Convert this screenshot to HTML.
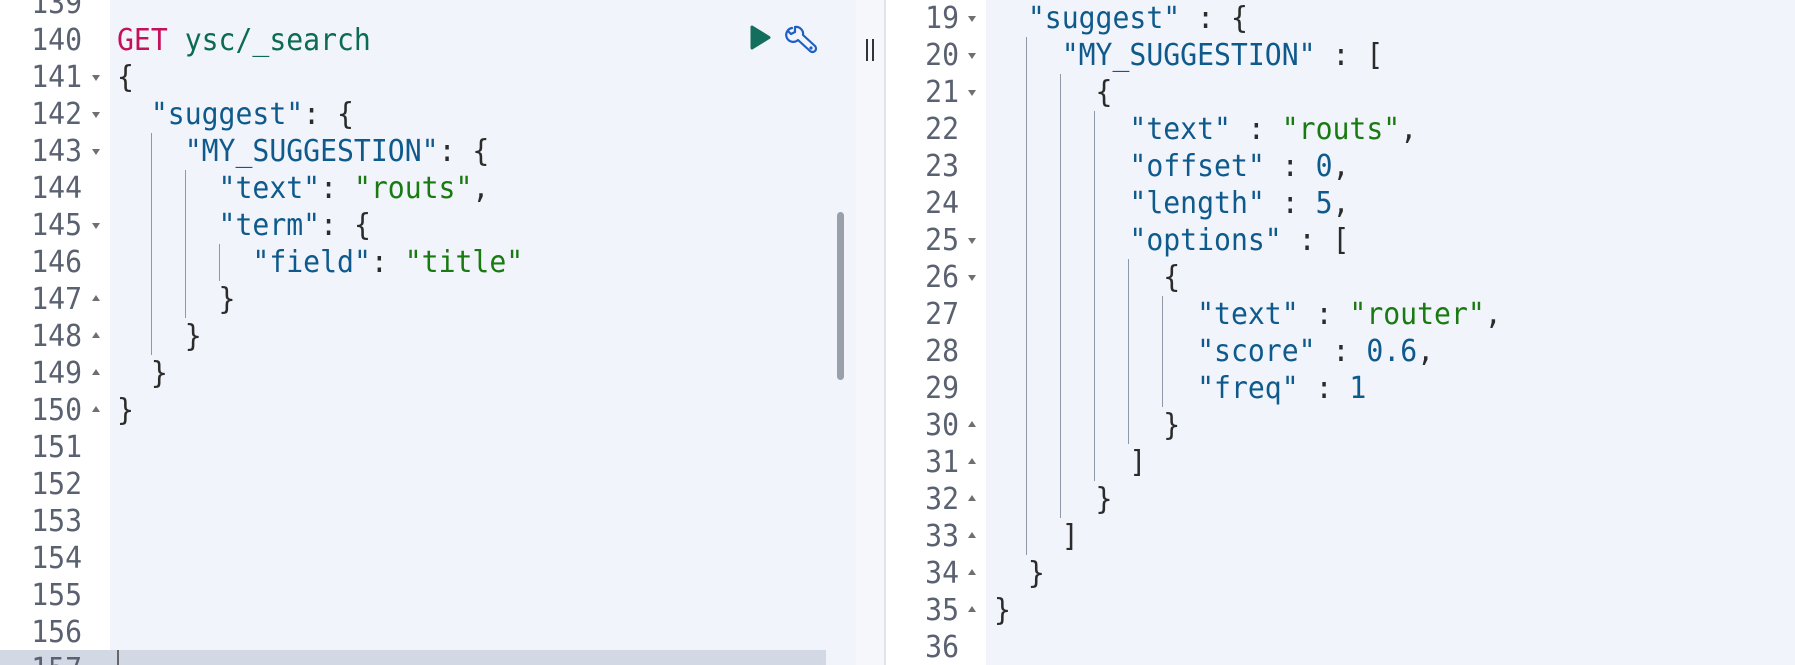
<!DOCTYPE html>
<html><head><meta charset="utf-8"><style>
html,body{margin:0;padding:0;width:1795px;height:665px;overflow:hidden;background:#fff;position:relative}
.f{font-family:"DejaVu Sans Mono","Liberation Mono",monospace;font-size:30px;line-height:37px;white-space:pre;position:absolute;height:37px;transform:scaleX(0.937);transform-origin:left center}
.n{color:#5a6170;text-align:right;width:60px;transform-origin:right center}
.c{color:#2b2b2b}
.k{color:#0f5a8c}.s{color:#1a7a12}.m{color:#c5105c}.u{color:#0c6b57}.num{color:#0f5a8c}
.g{position:absolute;width:1px;background:#8f98a6}
.dn,.up{position:absolute;width:0;height:0;border-left:4.5px solid transparent;border-right:4.5px solid transparent}
.dn{border-top:6px solid #6f6f6f}
.up{border-bottom:6px solid #6f6f6f}
</style></head><body>
<div style="position:absolute;left:110px;top:0;width:746px;height:665px;background:#f1f4fa"></div>
<div style="position:absolute;left:856px;top:0;width:28px;height:665px;background:#f5f7fb"></div>
<div style="position:absolute;left:884px;top:0;width:2px;height:665px;background:#dfe3ea"></div>
<div style="position:absolute;left:986px;top:0;width:809px;height:665px;background:#f1f4fa"></div>
<div style="position:absolute;left:0;top:650px;width:826px;height:15px;background:#d3d9e4"></div>
<div style="position:absolute;left:117px;top:650px;width:2px;height:15px;background:#666"></div>
<div style="position:absolute;left:837px;top:212px;width:7px;height:168px;background:#9aa0aa;border-radius:4px"></div>
<div style="position:absolute;left:866px;top:39px;width:2px;height:22px;background:#333"></div>
<div style="position:absolute;left:872px;top:39px;width:2px;height:22px;background:#333"></div>
<svg style="position:absolute;left:750px;top:25px" width="21" height="25"><path d="M2 2 L19 12.5 L2 23 Z" fill="#136e5e" stroke="#136e5e" stroke-width="3" stroke-linejoin="round"/></svg>
<svg style="position:absolute;left:783px;top:25px" width="36" height="30" viewBox="0 0 36 30"><path d="M9 3 A7 7 0 1 0 15 15 L27 26 A3.5 3.5 0 0 0 32 21 L20 10 A7 7 0 0 0 12 2 L12 7 L8 9 L5 6" fill="none" stroke="#1f5fc4" stroke-width="2.2" stroke-linejoin="round" stroke-linecap="round"/><circle cx="28" cy="23" r="1.6" fill="#1f5fc4"/></svg>

<!-- left -->
<div class="f n" style="left:22px;top:-15.5px">139</div>
<div class="f n" style="left:22px;top:21.5px">140</div><div class="f" style="left:117px;top:21.5px"><span class="m">GET</span> <span class="u">ysc/_search</span></div>
<div class="f n" style="left:22px;top:58.5px">141</div><div class="dn" style="left:92px;top:75px"></div><div class="f c" style="left:117px;top:58.5px">{</div>
<div class="f n" style="left:22px;top:95.5px">142</div><div class="dn" style="left:92px;top:112px"></div><div class="f c" style="left:117px;top:95.5px">  <span class="k">"suggest"</span>: {</div>
<div class="f n" style="left:22px;top:132.5px">143</div><div class="dn" style="left:92px;top:149px"></div><div class="f c" style="left:117px;top:132.5px">    <span class="k">"MY_SUGGESTION"</span>: {</div>
<div class="f n" style="left:22px;top:169.5px">144</div><div class="f c" style="left:117px;top:169.5px">      <span class="k">"text"</span>: <span class="s">"routs"</span>,</div>
<div class="f n" style="left:22px;top:206.5px">145</div><div class="dn" style="left:92px;top:223px"></div><div class="f c" style="left:117px;top:206.5px">      <span class="k">"term"</span>: {</div>
<div class="f n" style="left:22px;top:243.5px">146</div><div class="f c" style="left:117px;top:243.5px">        <span class="k">"field"</span>: <span class="s">"title"</span></div>
<div class="f n" style="left:22px;top:280.5px">147</div><div class="up" style="left:92px;top:295px"></div><div class="f c" style="left:117px;top:280.5px">      }</div>
<div class="f n" style="left:22px;top:317.5px">148</div><div class="up" style="left:92px;top:332px"></div><div class="f c" style="left:117px;top:317.5px">    }</div>
<div class="f n" style="left:22px;top:354.5px">149</div><div class="up" style="left:92px;top:369px"></div><div class="f c" style="left:117px;top:354.5px">  }</div>
<div class="f n" style="left:22px;top:391.5px">150</div><div class="up" style="left:92px;top:406px"></div><div class="f c" style="left:117px;top:391.5px">}</div>
<div class="f n" style="left:22px;top:428.5px">151</div>
<div class="f n" style="left:22px;top:465.5px">152</div>
<div class="f n" style="left:22px;top:502.5px">153</div>
<div class="f n" style="left:22px;top:539.5px">154</div>
<div class="f n" style="left:22px;top:576.5px">155</div>
<div class="f n" style="left:22px;top:613.5px">156</div>
<div class="f n" style="left:22px;top:650.5px">157</div>
<div class="g" style="left:151px;top:132.5px;height:222px"></div>
<div class="g" style="left:185px;top:169.5px;height:148px"></div>
<div class="g" style="left:219px;top:243.5px;height:37px"></div>

<!-- right -->
<div class="f n" style="left:899px;top:0px">19</div><div class="dn" style="left:968px;top:16px"></div><div class="f c" style="left:994px;top:0px">  <span class="k">"suggest"</span> : {</div>
<div class="f n" style="left:899px;top:37px">20</div><div class="dn" style="left:968px;top:53px"></div><div class="f c" style="left:994px;top:37px">    <span class="k">"MY_SUGGESTION"</span> : [</div>
<div class="f n" style="left:899px;top:74px">21</div><div class="dn" style="left:968px;top:90px"></div><div class="f c" style="left:994px;top:74px">      {</div>
<div class="f n" style="left:899px;top:111px">22</div><div class="f c" style="left:994px;top:111px">        <span class="k">"text"</span> : <span class="s">"routs"</span>,</div>
<div class="f n" style="left:899px;top:148px">23</div><div class="f c" style="left:994px;top:148px">        <span class="k">"offset"</span> : <span class="num">0</span>,</div>
<div class="f n" style="left:899px;top:185px">24</div><div class="f c" style="left:994px;top:185px">        <span class="k">"length"</span> : <span class="num">5</span>,</div>
<div class="f n" style="left:899px;top:222px">25</div><div class="dn" style="left:968px;top:238px"></div><div class="f c" style="left:994px;top:222px">        <span class="k">"options"</span> : [</div>
<div class="f n" style="left:899px;top:259px">26</div><div class="dn" style="left:968px;top:275px"></div><div class="f c" style="left:994px;top:259px">          {</div>
<div class="f n" style="left:899px;top:296px">27</div><div class="f c" style="left:994px;top:296px">            <span class="k">"text"</span> : <span class="s">"router"</span>,</div>
<div class="f n" style="left:899px;top:333px">28</div><div class="f c" style="left:994px;top:333px">            <span class="k">"score"</span> : <span class="num">0.6</span>,</div>
<div class="f n" style="left:899px;top:370px">29</div><div class="f c" style="left:994px;top:370px">            <span class="k">"freq"</span> : <span class="num">1</span></div>
<div class="f n" style="left:899px;top:407px">30</div><div class="up" style="left:968px;top:421px"></div><div class="f c" style="left:994px;top:407px">          }</div>
<div class="f n" style="left:899px;top:444px">31</div><div class="up" style="left:968px;top:458px"></div><div class="f c" style="left:994px;top:444px">        ]</div>
<div class="f n" style="left:899px;top:481px">32</div><div class="up" style="left:968px;top:495px"></div><div class="f c" style="left:994px;top:481px">      }</div>
<div class="f n" style="left:899px;top:518px">33</div><div class="up" style="left:968px;top:532px"></div><div class="f c" style="left:994px;top:518px">    ]</div>
<div class="f n" style="left:899px;top:555px">34</div><div class="up" style="left:968px;top:569px"></div><div class="f c" style="left:994px;top:555px">  }</div>
<div class="f n" style="left:899px;top:592px">35</div><div class="up" style="left:968px;top:606px"></div><div class="f c" style="left:994px;top:592px">}</div>
<div class="f n" style="left:899px;top:629px">36</div>
<div class="g" style="left:1026px;top:37px;height:518px"></div>
<div class="g" style="left:1060px;top:74px;height:444px"></div>
<div class="g" style="left:1094px;top:111px;height:370px"></div>
<div class="g" style="left:1128px;top:259px;height:185px"></div>
<div class="g" style="left:1162px;top:296px;height:111px"></div>
</body></html>
